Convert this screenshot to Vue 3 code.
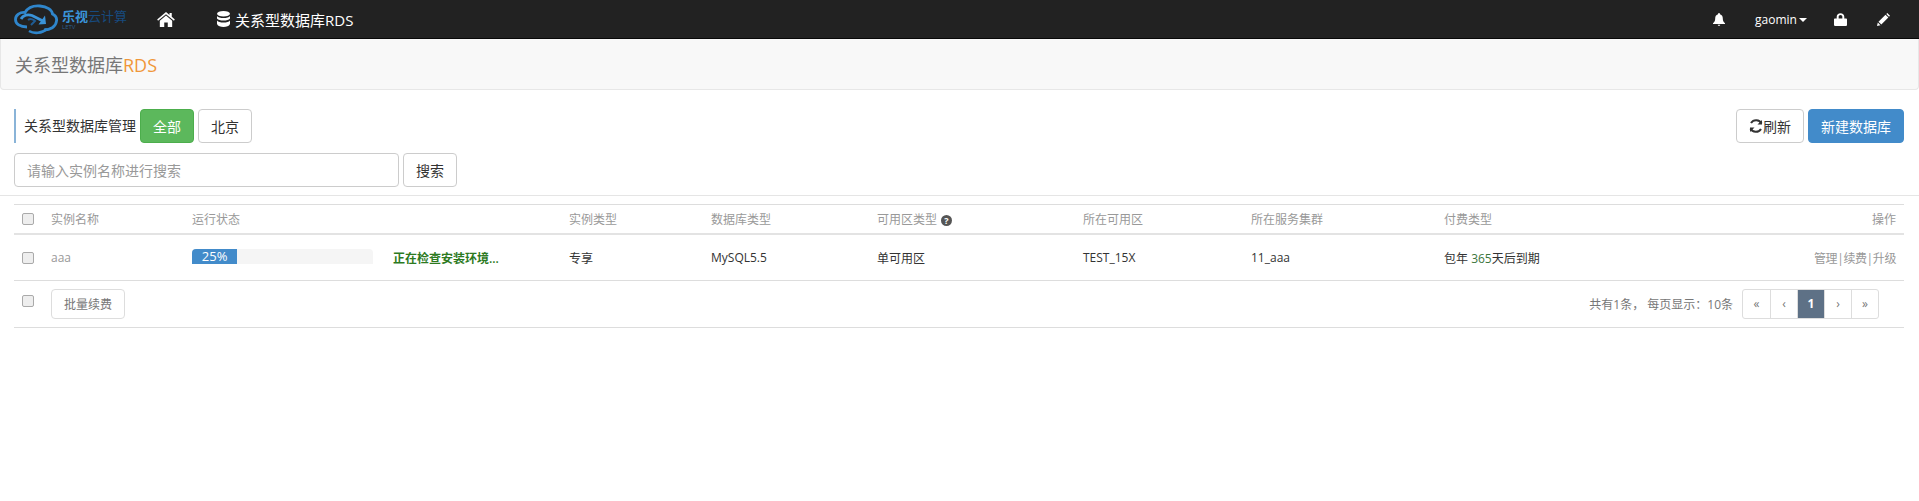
<script setup>
const headers = [
  { label: '实例名称' },
  { label: '运行状态' },
  { label: '' },
  { label: '实例类型' },
  { label: '数据库类型' },
  { label: '可用区类型', help: true },
  { label: '所在可用区' },
  { label: '所在服务集群' },
  { label: '付费类型' },
]
const progress = 25
const pages = ['«', '‹', '1', '›', '»']
</script>

<template>
  <div class="page">
    <nav class="navbar">
      <div class="brand">
        <svg class="logo" width="44" height="31" viewBox="0 0 44 31" fill="none">
          <path d="M13 23C6 23 1.500 20 1.500 15.500C1.500 11 6 8 11 8.500C14 3.500 20 1.500 26 2C33 2.500 38 6 38.500 10C41.500 11.500 43 14 42.500 17C42 23 36 26 30 26" stroke="#2f86cc" stroke-width="2.800"/>
          <path d="M7 15C9 11 14 10 18 11.500L30 17.500" stroke="#3a93d8" stroke-width="2.800"/>
          <path d="M32 20L24.500 20.500L31 11.500Z" fill="#3a93d8"/>
          <path d="M14 16C16 14.500 19 15 21 17L17 21" stroke="#1f5c94" stroke-width="2"/>
          <path d="M33 25C28 29.500 20 30 15 27" stroke="#2f86cc" stroke-width="2.600"/>
        </svg>
        <div class="brand-text">
          <div class="brand-name"><b>乐视</b>云计算</div>
          <div class="brand-sub">LETV</div>
        </div>
      </div>
      <svg class="home" width="18" height="15" viewBox="0 0 20 17" fill="#fff">
        <path d="M10 0L0 8.500L1 10L10 2.600L19 10L20 8.500L16.500 5.500V1H14V3.400Z"/>
        <path d="M10 4L3 9.800V17H8V12H12V17H17V9.800Z"/>
      </svg>
      <div class="nav-title">
        <svg width="13" height="16" viewBox="0 0 13 16" fill="#fff">
          <ellipse cx="6.500" cy="2.800" rx="6.500" ry="2.800"/>
          <path d="M0 5C1 6.500 3.500 7 6.500 7S12 6.500 13 5V7.500C12 9 9.500 9.500 6.500 9.500S1 9 0 7.500Z"/>
          <path d="M0 9.500C1 11 3.500 11.500 6.500 11.500S12 11 13 9.500V13C12 15.200 9.500 16 6.500 16S1 15.200 0 13Z"/>
        </svg>
        <span>关系型数据库RDS</span>
      </div>
      <div class="nav-right">
        <svg class="bell" width="12" height="13" viewBox="0 0 12 13" fill="#fff">
          <path d="M6 0C7 0 7 1 7 1.200C9 1.800 9.800 3.500 9.800 5.500C9.800 8 10.500 9 12 10.300V11H0V10.300C1.500 9 2.200 8 2.200 5.500C2.200 3.500 3 1.800 5 1.200C5 1 5 0 6 0Z"/>
          <path d="M4.800 11.800H7.200C7.200 12.500 6.700 13 6 13S4.800 12.500 4.800 11.800Z"/>
        </svg>
        <span class="user">gaomin<i class="caret"></i></span>
        <svg class="lock" width="13" height="13" viewBox="0 0 12 14" fill="#fff" preserveAspectRatio="none">
          <path d="M1 6H2.500V4C2.500 1.800 4 .3 6 .3S9.500 1.800 9.500 4V6H11C11.600 6 12 6.400 12 7V13C12 13.600 11.600 14 11 14H1C.4 14 0 13.600 0 13V7C0 6.400 .4 6 1 6ZM4.300 6H7.700V4C7.700 3 7 2.200 6 2.200S4.300 3 4.300 4Z"/>
        </svg>
        <svg class="pencil" width="13" height="13" viewBox="0 0 13 13" fill="#fff">
          <path d="M0 13L.8 9.500L3.500 12.200Z"/>
          <path d="M1.500 8.700L8.500 1.700L11.300 4.500L4.300 11.500Z"/>
          <path d="M9.300 1L10.300 0L13 2.700L12 3.700Z"/>
        </svg>
      </div>
    </nav>

    <header class="page-head">
      <h1>关系型数据库<span>RDS</span></h1>
    </header>

    <main class="content">
      <div class="toolbar">
        <div class="filters">
          <span class="section-label">关系型数据库管理</span>
          <button class="btn btn-green">全部</button>
          <button class="btn">北京</button>
        </div>
        <div class="actions">
          <button class="btn">
            <svg width="14" height="14" viewBox="0 0 14 14" fill="none" stroke="#333" stroke-width="2">
              <path d="M12.500 4.500A6 6 0 0 0 2 4"/>
              <path d="M1.500 9.500A6 6 0 0 0 12 10"/>
              <path d="M13 1V5.500H8.500" stroke="none" fill="#333"/>
              <path d="M1 13V8.500H5.500" stroke="none" fill="#333"/>
            </svg>刷新
          </button>
          <button class="btn btn-blue">新建数据库</button>
        </div>
      </div>

      <div class="search">
        <input class="search-input" type="text" placeholder="请输入实例名称进行搜索" />
        <button class="btn">搜索</button>
      </div>

      <div class="divider"></div>

      <div class="table">
        <div class="row row-head">
          <span class="cell-check"><i class="check"></i></span>
          <span v-for="(h, i) in headers" :key="i">
            {{ h.label }}<i v-if="h.help" class="help">?</i>
          </span>
          <span class="cell-right">操作</span>
        </div>
        <div class="row row-body">
          <span class="cell-check"><i class="check"></i></span>
          <span class="name">aaa</span>
          <span>
            <div class="progress">
              <div class="bar" :style="{ width: progress + '%' }">{{ progress }}%</div>
            </div>
          </span>
          <span class="status">正在检查安装环境...</span>
          <span>专享</span>
          <span>MySQL5.5</span>
          <span>单可用区</span>
          <span>TEST_15X</span>
          <span>11_aaa</span>
          <span>包年 <em>365</em>天后到期</span>
          <span class="cell-right ops">管理|续费|升级</span>
        </div>
        <div class="row-foot">
          <span class="cell-check foot-check"><i class="check"></i></span>
          <button class="btn btn-small">批量续费</button>
          <div class="pager">
            <span class="pager-text">共有1条， 每页显示：10条</span>
            <ul class="pages">
              <li v-for="p in pages" :key="p" :class="{ active: p === '1' }">{{ p }}</li>
            </ul>
          </div>
        </div>
      </div>
    </main>
  </div>
</template>

<style scoped>
.page {
  font-family: "Open Sans", "Noto Sans CJK SC", sans-serif;
  font-size: 12px;
  color: #333;
  width: 1919px;
  height: 501px;
  overflow: hidden;
  background: #fff;
}

.navbar {
  height: 38px;
  background: #222;
  border-bottom: 1px solid #080808;
  display: flex;
  align-items: center;
  padding-left: 14px;
  color: #fff;
}

.brand {
  display: flex;
  align-items: center;
  width: 143px;
  flex: none;
  gap: 4px;
}

.logo {
  flex: none;
}

.brand-text {
  line-height: 1;
  color: #174a7e;
}

.brand-name {
  font-size: 13px;
  line-height: 15px;
  margin-top: 2px;
}

.brand-name b {
  color: #3a93d8;
}

.brand-sub {
  font-size: 6px;
  line-height: 7px;
  color: #2a5f90;
}

.home {
  margin-right: 42px;
  flex: none;
}

.nav-title {
  display: flex;
  align-items: center;
  gap: 5px;
  font-size: 15px;
}

.nav-right {
  margin-left: auto;
  display: flex;
  align-items: center;
  padding-right: 29px;
}

.bell {
  margin-right: 30px;
}

.user {
  width: 60px;
  font-size: 12px;
  margin-right: 19px;
}

.caret {
  display: inline-block;
  margin-left: 2px;
  vertical-align: middle;
  border-top: 4px solid #fff;
  border-left: 4px solid transparent;
  border-right: 4px solid transparent;
}

.lock {
  margin-right: 30px;
}

.page-head {
  height: 51px;
  box-sizing: border-box;
  background: #f8f8f8;
  border: 1px solid #e7e7e7;
  border-top: none;
  border-radius: 0 0 4px 4px;
  padding-left: 14px;
  display: flex;
  align-items: center;
}

.page-head h1 {
  margin: 0;
  font-size: 18px;
  font-weight: 400;
  color: #777;
}

.page-head h1 span {
  color: #f0973a;
}

.content {
  padding: 19px 15px 0 14px;
  font-size: 14px;
}

.toolbar {
  display: flex;
  justify-content: space-between;
}

.filters,
.actions {
  display: flex;
  align-items: center;
  gap: 4px;
}

.section-label {
  border-left: 2px solid #8ab4d8;
  height: 34px;
  line-height: 34px;
  padding-left: 8px;
  color: #333;
}

.btn {
  font: inherit;
  height: 34px;
  padding: 0 12px;
  background: #fff;
  border: 1px solid #ccc;
  border-radius: 4px;
  color: #333;
  display: inline-flex;
  align-items: center;
}

.btn-green {
  background: #5cb85c;
  border-color: #4cae4c;
  color: #fff;
}

.btn-blue {
  background: #428bca;
  border-color: #428bca;
  color: #fff;
}

.search {
  display: flex;
  gap: 4px;
  margin-top: 10px;
}

.search-input {
  font: inherit;
  width: 385px;
  height: 34px;
  box-sizing: border-box;
  padding: 0 12px;
  border: 1px solid #ccc;
  border-radius: 4px;
  outline: none;
}

.search-input::placeholder {
  color: #999;
}

.divider {
  margin: 8px -15px 0 -14px;
  border-top: 1px solid #e5e5e5;
}

.table {
  margin-top: 8px;
  border-top: 1px solid #ddd;
  font-size: 12px;
}

.row {
  display: grid;
  grid-template-columns: 37px 141px 201px 176px 142px 166px 206px 168px 193px 1fr auto;
  align-items: center;
  box-sizing: border-box;
  border-bottom: 1px solid #ddd;
}

.row-head {
  height: 30px;
  color: #999;
  border-bottom-width: 2px;
  border-bottom-color: #e3e3e3;
}

.row-body {
  height: 46px;
  color: #333;
}

.cell-check {
  padding-left: 8px;
  display: flex;
}

.check {
  width: 10px;
  height: 10px;
  border: 1px solid #aaa;
  border-radius: 2px;
  background: #eee;
}

.cell-right {
  padding-right: 8px;
  text-align: right;
}

.help {
  display: inline-flex;
  align-items: center;
  justify-content: center;
  width: 11px;
  height: 11px;
  margin-left: 4px;
  border-radius: 50%;
  background: #555;
  color: #fff;
  font-size: 9px;
  font-style: normal;
  font-weight: 700;
  vertical-align: middle;
}

.name {
  color: #999;
}

.progress {
  width: 181px;
  height: 15px;
  margin-top: -2px;
  background: #f5f5f5;
  border-radius: 4px 4px 0 0;
}

.bar {
  height: 100%;
  background: #428bca;
  border-radius: 4px 0 0 0;
  color: #fff;
  font-size: 13px;
  text-align: center;
  line-height: 15px;
}

.status {
  color: #2d7a1f;
  font-weight: 600;
}

.row-body em {
  font-style: normal;
  color: #3c763d;
}

.ops {
  color: #999;
  letter-spacing: -.4px;
}

.row-foot {
  height: 47px;
  box-sizing: border-box;
  display: flex;
  align-items: center;
  border-bottom: 1px solid #ddd;
}

.foot-check {
  width: 37px;
  box-sizing: border-box;
  margin-top: -7px;
}

.btn-small {
  height: 30px;
  padding: 0 12px;
  color: #777;
  font-size: 12px;
  border-color: #ddd;
}

.pager {
  margin-left: auto;
  margin-right: 25px;
  display: flex;
  align-items: center;
  gap: 9px;
}

.pager-text {
  color: #777;
}

.pages {
  list-style: none;
  margin: 0;
  padding: 0;
  display: flex;
  border: 1px solid #ddd;
  border-radius: 3px;
}

.pages li {
  box-sizing: border-box;
  width: 27px;
  height: 28px;
  line-height: 28px;
  text-align: center;
  color: #777;
  border-left: 1px solid #ddd;
}

.pages li:first-child {
  border-left: none;
}

.pages .active {
  background: #5e7186;
  color: #fff;
  font-weight: 700;
}
</style>

<style>
html, body {
  margin: 0;
  background: #fff;
}
</style>
